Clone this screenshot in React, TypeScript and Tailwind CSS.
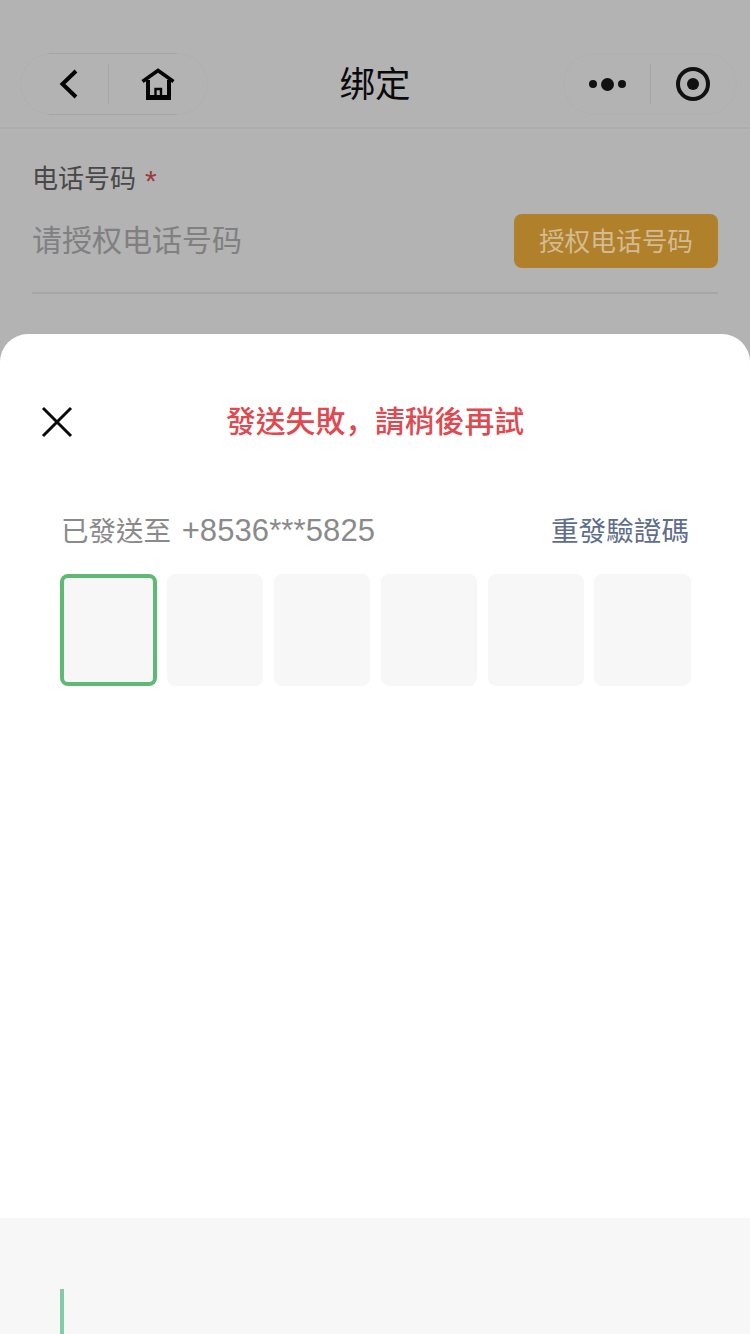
import React from 'react';

const sc = 'font-["Liberation_Sans","Noto_Sans_CJK_SC",sans-serif]';
const tc = 'font-["Liberation_Sans","Noto_Sans_CJK_TC",sans-serif]';

function NavBar() {
  return (
    <div className="relative flex h-[129px] items-end justify-between border-b-2 border-[#adadad] pb-[12px] pl-5 pr-[13px]">
      {/* back + home capsule */}
      <div className="relative flex h-[62px] w-[188px] items-center rounded-full border border-[#b0b0b0]">
        <div className="absolute -top-px left-7 h-px w-[128px] bg-[#a6a6a6]" />
        <div className="absolute -bottom-px left-7 h-px w-[128px] bg-[#a6a6a6]" />
        <div className="flex h-10 w-[88px] items-center justify-center border-r border-[#a6a6a6] pl-2">
          <svg width="24" height="32" viewBox="0 0 24 32" fill="none" stroke="#050505" strokeWidth="4">
            <path d="M19 3 L5.5 16 L19 29" />
          </svg>
        </div>
        <div className="mt-0.5 flex flex-1 items-center justify-center">
          <svg width="36" height="36" viewBox="0 0 36 36" fill="none" stroke="#050505">
            <path d="M2.5 14.5 L18 3.5 L33.5 14.5" strokeWidth="3.6" />
            <path d="M8 13 V31 M29 13 V31" strokeWidth="4" />
            <path d="M6 30.5 H31" strokeWidth="5" />
            <path d="M15.5 29 V22 H21 V29" strokeWidth="2.4" />
          </svg>
        </div>
      </div>

      <div className={`${sc} absolute bottom-[17px] left-0 right-0 text-center text-[35.5px] leading-[50px] text-[#0a0a0a]`}>绑定</div>

      {/* menu + capture capsule */}
      <div className="flex h-[62px] w-[174px] items-center rounded-full border border-[#b0b0b0]">
        <div className="flex h-10 w-[87px] items-center justify-center gap-[4px] border-r border-[#a6a6a6]">
          <span className="h-2 w-2 rounded-full bg-[#111111]" />
          <span className="h-[13px] w-[13px] rounded-full bg-[#111111]" />
          <span className="h-2 w-2 rounded-full bg-[#111111]" />
        </div>
        <div className="flex flex-1 items-center justify-center pr-[1px]">
          <div className="flex h-[34px] w-[34px] items-center justify-center rounded-full border-[4px] border-[#111111]">
            <span className="h-3 w-3 rounded-full bg-[#111111]" />
          </div>
        </div>
      </div>
    </div>
  );
}

function PhoneField() {
  return (
    <div className={`${sc} h-[205px] px-8`}>
      <div className="flex h-[100px] items-center pb-[1px]">
        <span className="text-[26px] leading-[36px] text-[#484848]">电话号码</span>
        <span className="ml-[9px] mt-1 text-[30px] leading-[36px] text-[#9a3a3a]">*</span>
      </div>
      <div className="flex h-[65px] items-start justify-between border-b-2 border-[#a6a6a6]">
        <span className="-mt-[14px] text-[30px] leading-[52px] text-[#808080]">请授权电话号码</span>
        <div className="-mt-[15px] flex h-[54px] w-[204px] items-center justify-center rounded-lg bg-[#b0802a] pt-0.5 text-[25.7px] text-[#d3bb93]">
          授权电话号码
        </div>
      </div>
    </div>
  );
}

function CodeSheet() {
  return (
    <div className={`${tc} flex flex-1 flex-col overflow-hidden rounded-t-[28px] bg-white`}>
      <div className="relative mt-[64px] flex h-[48px] items-center justify-center">
        <svg className="absolute left-[41px] top-[8px]" width="32" height="32" viewBox="0 0 32 32" fill="none" stroke="#0a0a0a" strokeWidth="3">
          <path d="M2 2 L30 30 M30 2 L2 30" />
        </svg>
        <span className="text-[29.8px] font-medium leading-[48px] text-[#e0494f]">
          發送失敗<span className={sc}>，</span>請稍後再試
        </span>
      </div>

      <div className="mt-[63px] flex items-center justify-between px-[61px]">
        <span className="text-[27.5px] leading-[44px] text-[#8a8a8a]">
          已發送至 <span className="ml-[3px] text-[31px] tracking-[0.1px]">+8536***5825</span>
        </span>
        <span className="text-[27.6px] leading-[44px] text-[#5f6d8c]">重發驗證碼</span>
      </div>

      <div className="mt-[20px] grid grid-cols-6 gap-[10.4px] pl-[60px] pr-[59px]">
        <div className="h-[112px] rounded-lg border-[4px] border-[#5fb974] bg-[#f7f7f7]" />
        <div className="h-[112px] rounded-lg bg-[#f7f7f7]" />
        <div className="h-[112px] rounded-lg bg-[#f7f7f7]" />
        <div className="h-[112px] rounded-lg bg-[#f7f7f7]" />
        <div className="h-[112px] rounded-lg bg-[#f7f7f7]" />
        <div className="h-[112px] rounded-lg bg-[#f7f7f7]" />
      </div>

      {/* keyboard area with caret */}
      <div className="mt-auto flex h-[116px] items-end bg-[#f7f7f7] pl-[60px]">
        <div className="h-[45px] w-1 bg-[#86cba9]" />
      </div>
    </div>
  );
}

export default function App() {
  return (
    <div className="flex h-[1334px] w-[750px] flex-col overflow-hidden bg-[#b3b3b3]">
      <NavBar />
      <PhoneField />
      <CodeSheet />
    </div>
  );
}
